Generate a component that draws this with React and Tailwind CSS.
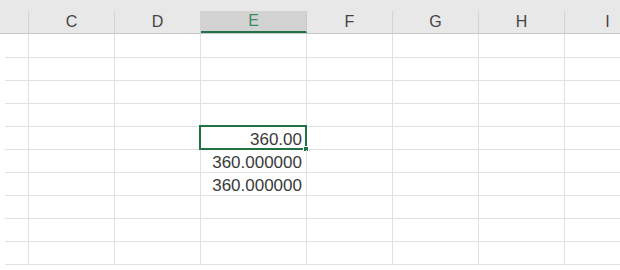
const columns = [
  { key: "C", w: "w-[86px]" },
  { key: "D", w: "w-[86px]" },
  { key: "E", w: "w-[106px]", selected: true },
  { key: "F", w: "w-[86px]" },
  { key: "G", w: "w-[86px]" },
  { key: "H", w: "w-[86px]" },
  { key: "I", w: "w-[86px]" },
];

const values = { 4: "360.00", 5: "360.000000", 6: "360.000000" };

function HeaderRow() {
  return (
    <div className="h-[34px] bg-[#e8e8e8] pt-[11px] pl-[5px] border-b border-[#c8c8c8]">
      <div className="flex h-[22px]">
        <div className="w-[24px] shrink-0 border-r border-[#d3d3d3]" />
        {columns.map((c) => (
          <div
            key={c.key}
            className={
              c.w +
              " shrink-0 flex items-center justify-center text-[16px] border-r " +
              (c.selected
                ? "bg-[#d2d2d2] text-[#3f8a5c] border-[#c8c8c8] border-b-2 border-b-[#217346]"
                : "text-[#444] border-[#d3d3d3]")
            }
          >
            {c.key}
          </div>
        ))}
      </div>
    </div>
  );
}

function Row({ index }) {
  const h = index === 0 ? "h-[24px]" : "h-[23px]";
  return (
    <div className={h + " flex border-b border-[#e1e1e1]"}>
      <div className="w-[24px] shrink-0 border-r border-[#e1e1e1]" />
      {columns.map((c) => (
        <div
          key={c.key}
          className={
            c.w +
            " shrink-0 border-r border-[#e1e1e1] flex items-center justify-end pr-[4px] pt-[3px] text-[17px] text-[#3a3a3a] relative"
          }
        >
          {c.selected && values[index]}
          {c.selected && index === 4 && (
            <>
              <div className="absolute left-[-2px] top-[-2px] right-[-1px] bottom-[-1px] border-2 border-[#217346]" />
              <div className="absolute right-[-3px] bottom-[-3px] w-[6px] h-[6px] bg-[#217346] border border-white" />
            </>
          )}
        </div>
      ))}
    </div>
  );
}

export default function App() {
  return (
    <div
      className="w-[620px] h-[270px] overflow-hidden bg-white"
      style={{ fontFamily: '"Liberation Sans", Arial, sans-serif' }}
    >
      <HeaderRow />
      <div className="pl-[5px]">
        {Array.from({ length: 10 }).map((_, i) => (
          <Row key={i} index={i} />
        ))}
      </div>
    </div>
  );
}
